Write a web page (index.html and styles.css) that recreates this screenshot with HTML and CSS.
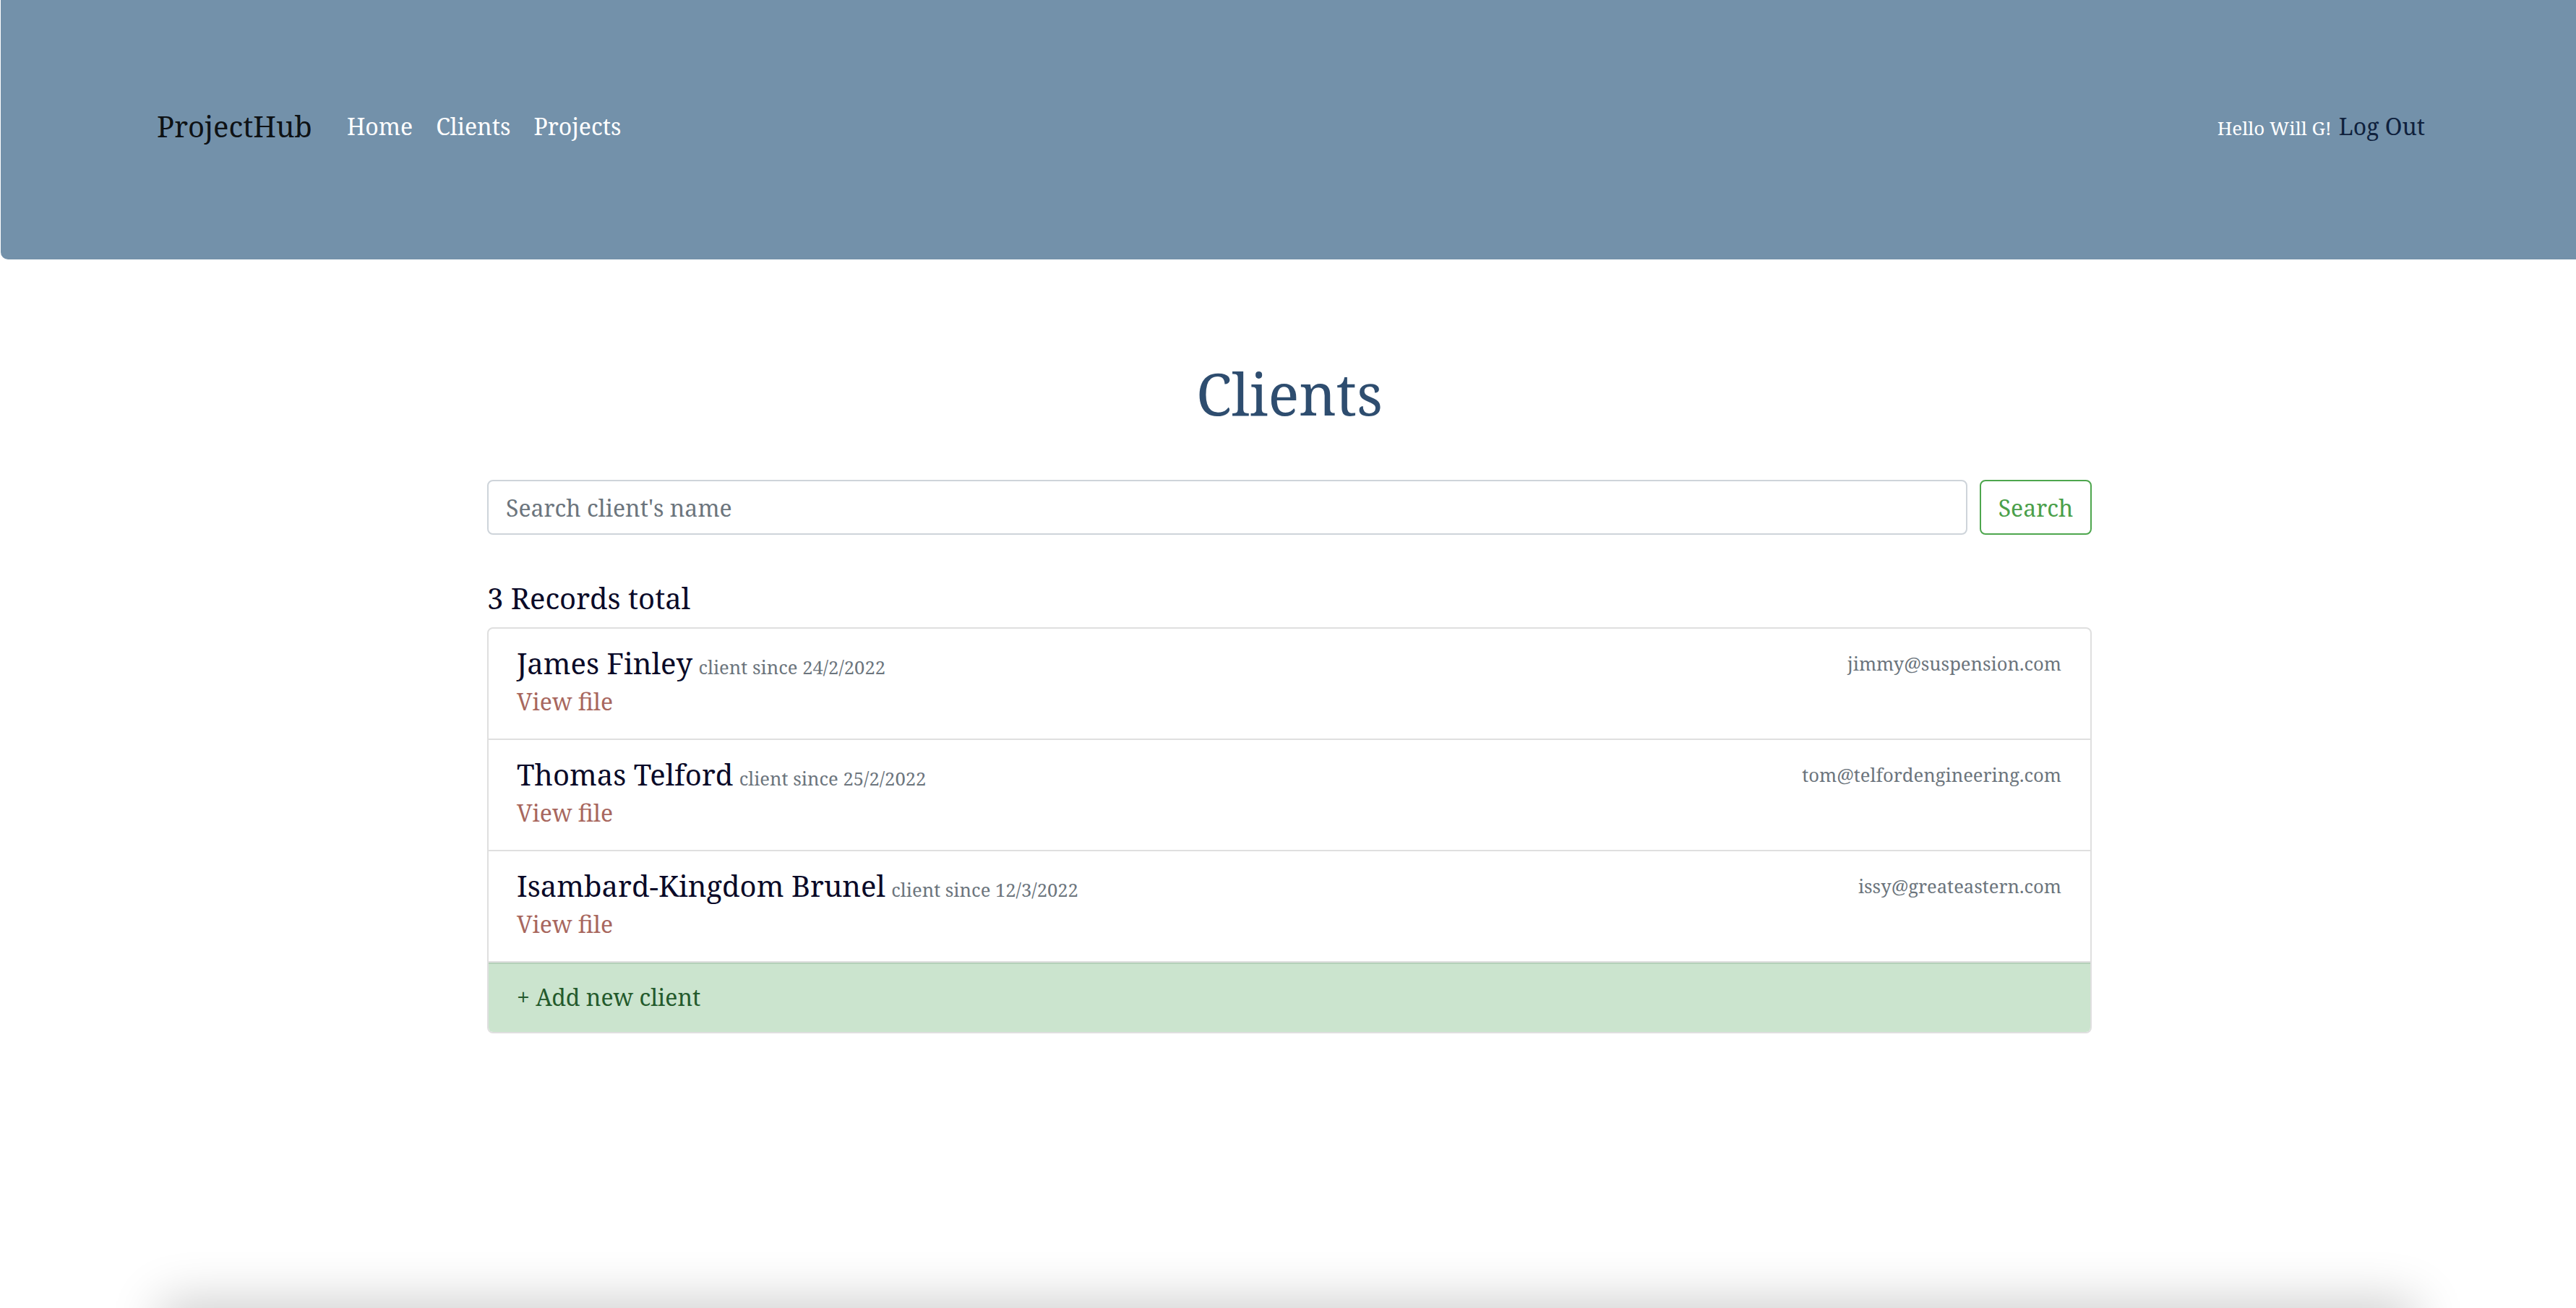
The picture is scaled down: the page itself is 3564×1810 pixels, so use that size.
FILE: index.html
```html
<!DOCTYPE html>
<html lang="en">
<head>
<meta charset="utf-8">
<title>ProjectHub - Clients</title>
<link rel="stylesheet" href="styles.css">
</head>
<body>
<div class="page">
  <header class="header">
    <nav class="navbar">
      <div class="nav-left">
        <a class="brand" href="#">ProjectHub</a>
        <ul class="nav-links">
          <li><a class="nav-link" href="#">Home</a></li>
          <li><a class="nav-link" href="#">Clients</a></li>
          <li><a class="nav-link" href="#">Projects</a></li>
        </ul>
      </div>
      <div class="nav-right">
        <span class="hello">Hello Will G!</span>
        <a class="logout" href="#">Log Out</a>
      </div>
    </nav>
  </header>

  <main class="container">
    <h1 class="title">Clients</h1>
    <form class="search">
      <input class="search-input" type="text" placeholder="Search client's name">
      <button class="search-btn" type="button">Search</button>
    </form>
    <h5 class="records">3 Records total</h5>
    <ul class="list">
      <li class="item">
        <div class="item-main">
          <div class="name-line"><span class="name">James Finley</span> <small class="since">client since 24/2/2022</small></div>
          <a class="view" href="#">View file</a>
        </div>
        <small class="email">jimmy@suspension.com</small>
      </li>
      <li class="item">
        <div class="item-main">
          <div class="name-line"><span class="name">Thomas Telford</span> <small class="since">client since 25/2/2022</small></div>
          <a class="view" href="#">View file</a>
        </div>
        <small class="email">tom@telfordengineering.com</small>
      </li>
      <li class="item">
        <div class="item-main">
          <div class="name-line"><span class="name">Isambard-Kingdom Brunel</span> <small class="since">client since 12/3/2022</small></div>
          <a class="view" href="#">View file</a>
        </div>
        <small class="email">issy@greateastern.com</small>
      </li>
      <li class="item add"><a class="add-link" href="#">+ Add new client</a></li>
    </ul>
  </main>

  <footer class="footer"></footer>
</div>
</body>
</html>
```

FILE: styles.css
```css
html, body {
  margin: 0;
  padding: 0;
  height: 100%;
  overflow: hidden;
  background: #fff;
}

body {
  font-family: "Noto Serif", "DejaVu Serif", serif;
  font-size: 32px;
  line-height: 1.5;
  color: #212529;
}

.page {
  height: 100vh;
  display: flex;
  flex-direction: column;
  overflow: hidden;
}

a { text-decoration: none; }

.header {
  flex-shrink: 0;
  height: 359px;
  background: #7391aa;
  border-bottom-left-radius: 10px;
  margin-left: 1px;
  box-sizing: border-box;
  padding: 0 209px 9px 216px;
  display: flex;
  align-items: center;
}

.navbar {
  flex: 1;
  display: flex;
  align-items: center;
  justify-content: space-between;
}

.nav-left {
  display: flex;
  align-items: center;
}

.brand {
  font-size: 40px;
  line-height: 60px;
  color: rgba(0, 0, 0, 0.9);
  margin-right: 32px;
}

.nav-links {
  display: flex;
  list-style: none;
  margin: 0;
  padding: 0;
}

.nav-link {
  display: block;
  padding: 0 16px;
  color: #fff;
  line-height: 48px;
}

.nav-right {
  display: flex;
  align-items: baseline;
  gap: 10px;
}

.hello {
  font-size: 26px;
  color: #fff;
}

.logout {
  color: #0f213d;
  line-height: 48px;
}

.container {
  width: 2220px;
  margin: 0 auto;
  position: relative;
  left: 2px;
}

.title {
  margin: 137px 0 72px;
  text-align: center;
  font-size: 80px;
  line-height: 96px;
  font-weight: 400;
  color: #2e4d6f;
}

.search {
  display: flex;
  gap: 17px;
  margin: 0 0 64px;
}

.search-input {
  flex: 1;
  box-sizing: border-box;
  height: 76px;
  padding: 0 24px;
  border: 2px solid #ced4da;
  border-radius: 8px;
  font-family: inherit;
  font-size: 32px;
  color: #495057;
  outline: none;
}

.search-input::placeholder {
  color: #6c757d;
}

.search-btn {
  box-sizing: border-box;
  width: 155px;
  height: 76px;
  border: 2px solid #4da64d;
  border-radius: 8px;
  background: #fff;
  color: #4a9f4a;
  font-family: inherit;
  font-size: 32px;
  padding: 0;
}

.records {
  margin: 0 0 16px;
  font-size: 40px;
  line-height: 48px;
  font-weight: 400;
  color: #0a0a28;
}

.list {
  list-style: none;
  margin: 0;
  padding: 0;
  border: 2px solid #dfdfdf;
  border-radius: 8px;
  overflow: hidden;
}

.item {
  display: flex;
  justify-content: space-between;
  align-items: flex-start;
  padding: 24px 40px 27px 39px;
  border-bottom: 2px solid #dfdfdf;
}

.item-main {
  display: flex;
  flex-direction: column;
  align-items: flex-start;
}

.name-line {
  height: 48px;
  line-height: 48px;
  margin-bottom: 5px;
  white-space: nowrap;
}

.name {
  font-size: 40px;
  line-height: 48px;
  color: #0a0a28;
}

.since {
  font-size: 25.6px;
  line-height: 1;
  color: #6c757d;
}

.view {
  color: #a8675e;
  line-height: 48px;
}

.email {
  font-size: 25.6px;
  line-height: 39px;
  color: #6c757d;
  margin-top: 5px;
}

.item.add {
  background: #cbe4ce;
  border-top: 0;
  border-bottom: 0;
  padding: 24px 39px 24px;
  box-shadow: inset 0 2px 0 #b4d0b8;
}

.add-link {
  color: #245a2c;
  line-height: 48px;
}

.footer {
  flex-shrink: 0;
  height: 60px;
  width: 3100px;
  margin: auto auto -60px;
  box-shadow: 0 0 70px 10px rgba(0, 0, 0, 0.2);
  background: #fff;
}
```
